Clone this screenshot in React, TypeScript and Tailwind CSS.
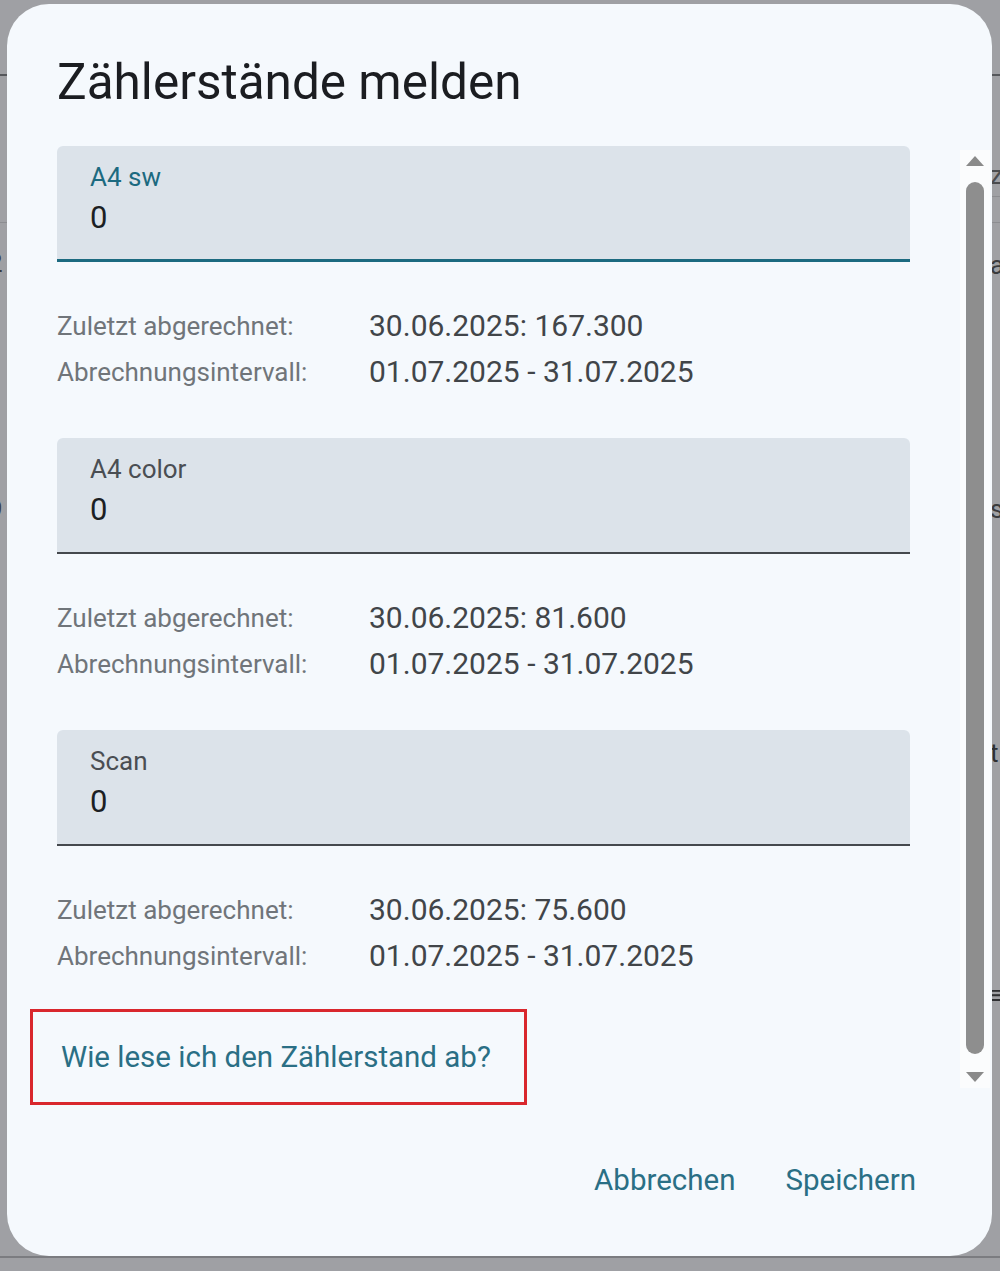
import React from 'react';

type Counter = {
  label: string;
  value: string;
  last: string;
  interval: string;
  focused?: boolean;
};

const counters: Counter[] = [
  { label: 'A4 sw', value: '0', last: '30.06.2025: 167.300', interval: '01.07.2025 - 31.07.2025', focused: true },
  { label: 'A4 color', value: '0', last: '30.06.2025: 81.600', interval: '01.07.2025 - 31.07.2025' },
  { label: 'Scan', value: '0', last: '30.06.2025: 75.600', interval: '01.07.2025 - 31.07.2025' },
];

const CounterField: React.FC<{ counter: Counter }> = ({ counter }) => (
  <div className="flex flex-col">
    <div
      className={
        counter.focused
          ? 'h-[116px] rounded-t-[6px] bg-[#dce3ea] border-b-[3px] border-[#1c6a80] pl-[33px] pt-[14px]'
          : 'h-[116px] rounded-t-[6px] bg-[#dce3ea] border-b-2 border-[#45494e] pl-[33px] pt-[14px]'
      }
    >
      <div className={counter.focused ? 'text-[26px] leading-[34px] text-[#1c6a80]' : 'text-[26px] leading-[34px] text-[#4a4e53]'}>
        {counter.label}
      </div>
      <div className="text-[31px] leading-[48px] text-[#1c1f23]">{counter.value}</div>
    </div>
    <div className="mt-[41px] grid grid-cols-[312px_1fr] text-[26px] leading-[46px]">
      <div className="text-[#70757a]">Zuletzt abgerechnet:</div>
      <div className="text-[30px] text-[#414549]">{counter.last}</div>
      <div className="text-[#70757a]">Abrechnungsintervall:</div>
      <div className="text-[30px] text-[#414549]">{counter.interval}</div>
    </div>
  </div>
);

const Scrollbar: React.FC = () => (
  <div className="w-[30px] flex flex-col items-center bg-[#fbfcfd] pt-[6px] pb-[6px]">
    <div className="w-0 h-0 border-l-[9px] border-r-[9px] border-b-[10px] border-l-transparent border-r-transparent border-b-[#8a8a8a]" />
    <div className="mt-[16px] w-[18px] h-[872px] rounded-full bg-[#8e8e8e]" />
    <div className="mt-[18px] w-0 h-0 border-l-[9px] border-r-[9px] border-t-[10px] border-l-transparent border-r-transparent border-t-[#8a8a8a]" />
  </div>
);

export default function App() {
  return (
    <div
      className="relative w-[1000px] h-[1271px] overflow-hidden bg-[#9fa0a4]"
      style={{ fontFamily: 'Roboto, "Noto Sans", sans-serif' }}
    >
      {/* dimmed page behind the dialog */}
      <div className="absolute left-0 top-[74px] w-full h-[2px] bg-[#55575b]" />
      <div className="absolute left-0 top-[222px] w-full h-px bg-[#8c8d91]" />
      <div className="absolute right-0 top-[196px] w-[10px] h-px bg-[#8c8d91]" />
      <div className="absolute left-[-12px] top-[244px] text-[26px] text-[#3a3b3e]">2</div>
      <div className="absolute left-[-12px] top-[490px] text-[26px] text-[#3a3b3e]">9</div>
      <div className="absolute left-[990px] top-[156px] text-[26px] text-[#4a4b4e]">z</div>
      <div className="absolute left-[990px] top-[246px] text-[26px] text-[#3a3b3e]">a</div>
      <div className="absolute left-[990px] top-[490px] text-[26px] text-[#3a3b3e]">s</div>
      <div className="absolute left-[990px] top-[734px] text-[26px] text-[#2e2f32]">t</div>
      <div className="absolute left-[990px] top-[976px] text-[26px] text-[#2e2f32]">≡</div>
      <div className="absolute left-0 top-[1256px] w-full h-[2px] bg-[#7b7c80]" />

      {/* dialog */}
      <div className="absolute left-[7px] top-[4px] w-[985px] h-[1252px] rounded-[42px] bg-[#f5f9fd] flex flex-col">
        <h1 className="ml-[50px] mt-[50px] text-[49.5px] leading-[56px] text-[#1b1d21] font-normal">
          Zählerstände melden
        </h1>
        <div className="mt-[36px] flex">
          <div className="ml-[50px] w-[853px] flex flex-col gap-[43px]">
            {counters.map((c) => (
              <CounterField key={c.label} counter={c} />
            ))}
            <div className="-ml-[27px] -mt-[13px] w-[497px] h-[96px] border-[3px] border-[#d9272d] flex items-center pl-[28px]">
              <span className="text-[29.5px] text-[#2a6f85]">Wie lese ich den Zählerstand ab?</span>
            </div>
          </div>
          <div className="ml-[50px] mt-[4px]">
            <Scrollbar />
          </div>
        </div>
        <div className="mt-[55px] mr-[76px] flex justify-end gap-[50px] text-[29.5px] leading-[40px] text-[#2a6f85]">
          <button>Abbrechen</button>
          <button>Speichern</button>
        </div>
      </div>
    </div>
  );
}
